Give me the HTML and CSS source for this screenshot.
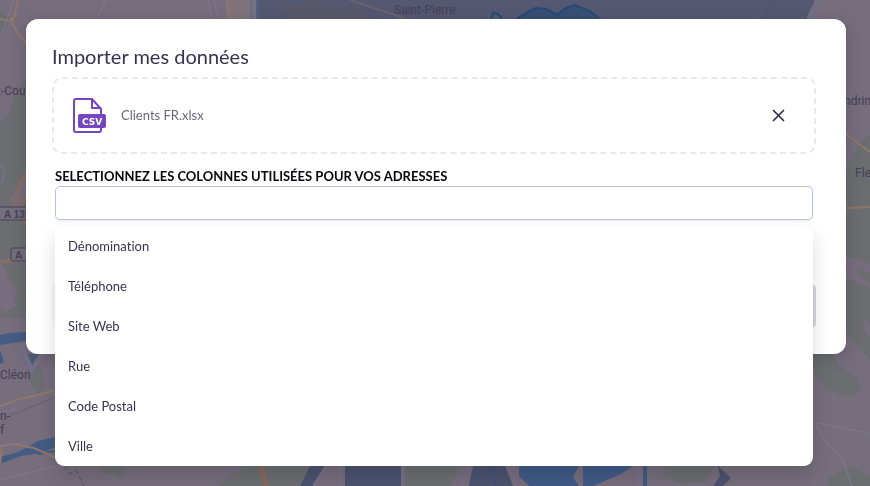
FILE: index.html
```html
<!DOCTYPE html>
<html lang="fr">
<head>
    <meta charset="UTF-8">
    <meta name="viewport" content="width=device-width, initial-scale=1.0">
    <title>Importer mes données</title>
    <link rel="stylesheet" href="styles.css">
</head>
<body>
    <!-- Dimmed map behind the dialog -->
    <svg class="map" viewBox="0 0 870 486" preserveAspectRatio="xMidYMid slice" aria-hidden="true">
        <rect width="870" height="486" fill="#766d7d"/>

        <!-- Woods -->
        <g fill="#6b6d70">
            <path d="M0 124l8-10 9-22 9-14v240H0z"/>
            <path d="M0 12l9 5-3 12-6 3z"/>
            <path d="M846 170l8-16 8-14 8-6v226l-24-26z"/>
            <path d="M813 354h20l6 12 18 12 4 13-14 6-20-8-14-15z"/>
            <path d="M26 376l8-18 8 12 3 16-7 8z"/>
            <path d="M100 466h30l-8 11-22-5zM246 466h70l-14 20h-85zM384 466h76l-10 20h-66zM665 466h50l-6 14-26 4-20-6zM828 478l22-12 20 10v10h-42z"/>
        </g>
        <g fill="#786d7e">
            <path d="M0 262l6 8 2 10 10 10-4 8 2 8-10 6-6-2zM9 200l10-12 7-12v26l-9 5z"/>
            <path d="M846 280l14-12 10 6v-10l-24-8zM852 275l9-5 2-8-4 14 11 8v4l-24-10zM864 318l6 6v12l-5-4z"/>
        </g>

        <!-- Water -->
        <path d="M256 0h559l-9 19H256z" fill="#545872"/>
        <path d="M225 0h24v19h-22z" fill="#80737a"/>
        <path d="M249 0h7v19h-7z" fill="#797083"/>
        <path d="M251 0v19M257 0v19" stroke="#526c8f" fill="none"/>
        <path d="M315 0l20 8 19-3 23 14h-90l-8-10z" fill="#59586b"/>
        <path d="M516 19l12-7 8-4 10 2 12 5 10-8 8-2 14 6 10 8z" fill="#394f75"/>
        <path d="M491 19l2-6 5 1 4 5M516 19l12-7 8-4 10 1 11 6 9-7 9-3 15 6 10 8" fill="none" stroke="#274879" stroke-width="2"/>
        <path d="M807 19l8-19h4l-6 19z" fill="#717087"/>
        <path d="M766 19v-9l4-6 4-4" fill="none" stroke="#3f4f6b" stroke-dasharray="3 2"/>
        <path d="M0 335l10-2 16-1v9l-26 4zM0 350l4 12-4 2z" fill="#445c83"/>
        <path d="M0 457l18-5 20-11 17-4v10l-14 6-20 3-21 8z" fill="#445c83"/>
        <path d="M38 454l17-3" stroke="#445c83" stroke-width="2"/>
        <path d="M310 466h16l-12 20h-14zM345 466h56v20h-56zM473 466h32l8 20h-44zM718 466l13 12-8 8h-10l7-10z" fill="#4c5370"/>
        <path d="M519 466h60l-6 11 6 9h-50l-10-10zM583 466h50l-12 8-28 12h-10zM643 466h4v20h-4z" fill="#405b87"/>
        <path d="M341 466v20M403 466v20M470 466l-9 20M508 466l9 20M639 466v20M327 466l-13 20" stroke="#796f84" stroke-width="4" fill="none"/>
        <path d="M492 466l4 20" stroke="#38547d" stroke-width="2" stroke-dasharray="3 1"/>
        <path d="M24 354l8 16 8-16z" fill="#505f73"/>
        <path d="M22 346l10 24 12-21" fill="none" stroke="#77708c" stroke-width="4"/>

        <!-- Roads -->
        <g fill="none" stroke="#90766b" stroke-width="2">
            <path d="M0 19l9 2 7-6M11 20l6 12 9 11M18 0l-3 14-3 7"/>
            <path d="M227 0l3 19"/>
            <path d="M846 134l24 18M846 208l24-1"/>
            <path d="M0 406l20-7 22-5 13-4M0 446l12-2 22 4 16 7 14 7M2 447l-2 18"/>
        </g>
        <path d="M350 0l30 10 27 9" fill="none" stroke="#69636b" stroke-width="2"/>
        <path d="M26 173l-9 18-3 17 12 16M0 262l26-3M20 208l6-12" fill="none" stroke="#866c66" stroke-width="4"/>
        <path d="M261 466l5 20" stroke="#89685d" stroke-width="5"/>
        <g fill="none" stroke="#7f7b90">
            <path d="M106 0l-9 19M208 0l3 19M214 0l4 19M14 0L2 33M0 412l16-3M0 480l54-14M0 447l26-5M814 422l56 12M816 426l14 21 12 10 10 29"/>
            <path d="M10 416l45-19" stroke="#66606f"/>
            <path d="M64 466l6 8 6-4 8 16" stroke="#575364" stroke-dasharray="5 3"/>
        </g>
        <circle cx="-10" cy="174" r="14" fill="none" stroke="#77708c" stroke-width="2"/>

        <!-- Road shields -->
        <g fill="#746e7e" stroke="#484353">
            <rect x="-1" y="207" width="40" height="13" rx="2"/>
            <rect x="11" y="248" width="30" height="13" rx="2"/>
        </g>
        <g class="shield-name">
            <text x="4" y="218">A 139</text>
            <text x="15" y="259">A</text>
        </g>

        <!-- Places -->
        <g class="place-name">
            <text x="394" y="14">Saint-Pierre</text>
            <text x="-3" y="95">t-Cour</text>
            <text x="844" y="105">ndrin</text>
            <text x="855" y="177">Fle</text>
            <text x="0" y="379">Cléon</text>
            <text x="0" y="420">n-</text>
            <text x="0" y="434">f</text>
        </g>
    </svg>

    <main class="modal" role="dialog" aria-labelledby="modalTitle">
        <h1 id="modalTitle">Importer mes données</h1>

        <div class="file-box">
            <svg class="file-icon" viewBox="0 0 34 36" aria-hidden="true">
                <path d="M28 17V11L19 1H3Q1 1 1 3v29q0 2 2 2h23q2 0 2-2v-2" fill="none" stroke="#7546bd" stroke-width="2"/>
                <path d="M19 1v9h9" fill="none" stroke="#7546bd" stroke-width="2" stroke-linejoin="round"/>
                <rect x="5" y="16" width="28" height="14" rx="2" fill="#7546bd"/>
                <text x="19" y="27" class="csv-text">CSV</text>
            </svg>
            <span class="file-name">Clients FR.xlsx</span>
            <button class="remove-btn" type="button" aria-label="Retirer le fichier">
                <svg viewBox="0 0 14 14"><path d="M1 1l11 11M12 1L1 12"/></svg>
            </button>
        </div>

        <div class="field">
            <label for="columns">SELECTIONNEZ LES COLONNES UTILISÉES POUR VOS ADRESSES</label>
            <input type="text" id="columns" role="combobox" aria-expanded="true" aria-controls="columnList" autocomplete="off">
            <ul class="options" id="columnList" role="listbox">
                <li role="option">Dénomination</li>
                <li role="option">Téléphone</li>
                <li role="option">Site Web</li>
                <li role="option">Rue</li>
                <li role="option">Code Postal</li>
                <li role="option">Ville</li>
            </ul>
        </div>

        <button class="submit-btn" type="button" aria-label="Importer" disabled></button>
    </main>
</body>
</html>
```
FILE: styles.css
```css
* {
    box-sizing: border-box;
}

body {
    margin: 0;
    min-height: 100vh;
    background: #766d7d;
    color: #37324f;
    font-family: Lato, "Open Sans", sans-serif;
    font-size: 13px;
    font-variant-ligatures: none;
    overflow: hidden;
}

/* Map background */
.map {
    position: fixed;
    inset: 0;
    width: 100%;
    height: 100%;
}

.place-name {
    font-family: Roboto, sans-serif;
    font-size: 12px;
    fill: #454057;
}

.shield-name {
    font-family: "Liberation Sans", sans-serif;
    font-size: 10px;
    font-weight: bold;
    fill: #484353;
}

/* Dialog */
.modal {
    position: relative;
    margin: 19px 24px 0 26px;
    padding: 23px 30px 26px 26px;
    background: white;
    border-radius: 12px;
    box-shadow: 0 4px 16px rgba(40, 35, 50, 0.25);
}

h1 {
    margin: 0 0 7px;
    font-size: 20px;
    line-height: 28px;
    font-weight: normal;
}

.file-box {
    display: flex;
    align-items: center;
    height: 77px;
    padding: 0 28px 0 19px;
    border: 2px dashed #e9e7f0;
    border-radius: 10px;
}

.file-icon {
    width: 34px;
    height: 36px;
    margin-right: 14px;
}

.csv-text {
    font-family: "DejaVu Sans", sans-serif;
    font-size: 9px;
    font-weight: bold;
    fill: white;
    text-anchor: middle;
}

.file-name {
    flex: 1;
    padding-bottom: 2px;
    color: #6a667c;
}

.remove-btn {
    width: 14px;
    height: 14px;
    padding: 0;
    border: none;
    background: none;
    cursor: pointer;
}

.remove-btn svg {
    display: block;
    fill: none;
    stroke: #241f3d;
    stroke-width: 1.5;
}

.field {
    position: relative;
    margin: 14px 3px 0;
}

label {
    display: block;
    padding-bottom: 2px;
    line-height: 16px;
    font-weight: bold;
    color: #08070f;
}

input {
    display: block;
    width: 100%;
    height: 34px;
    padding: 0 12px;
    border: 1px solid #bcc3df;
    border-radius: 5px;
    background: white;
    font: inherit;
    color: inherit;
    outline: none;
    box-shadow: 0 1px 2px rgba(0, 0, 0, 0.08);
}

.options {
    position: absolute;
    top: 100%;
    left: 0;
    right: 0;
    z-index: 1;
    margin: 6px 0 0;
    padding: 0;
    list-style: none;
    background: white;
    border-radius: 9px;
    box-shadow: 0 10px 20px rgba(0, 0, 0, 0.15);
}

.options li {
    padding: 0 13px;
    line-height: 40px;
    cursor: pointer;
}

.submit-btn {
    display: block;
    width: 100%;
    height: 44px;
    margin-top: 64px;
    border: none;
    border-radius: 5px;
    background: linear-gradient(90deg, #f8f7fb, #d8d5e8);
}
```
